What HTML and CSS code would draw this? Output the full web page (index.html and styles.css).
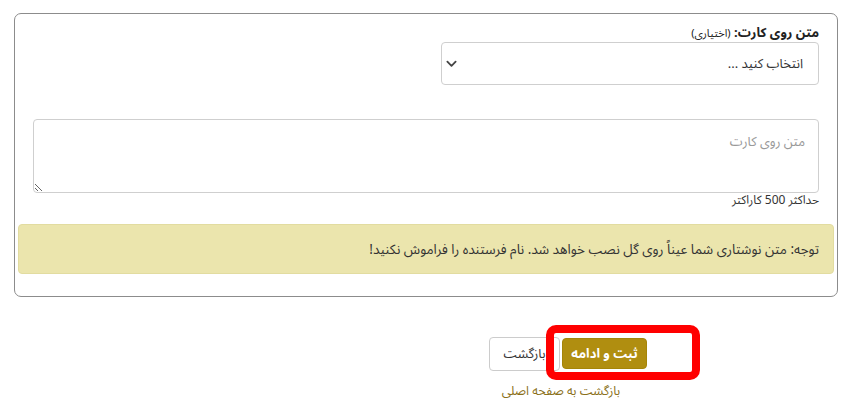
FILE: index.html
```html
<!DOCTYPE html>
<html lang="fa" dir="rtl">

<head>
  <meta charset="UTF-8">
  <meta name="viewport" content="width=device-width, initial-scale=1.0">
  <title>متن روی کارت</title>
  <link rel="stylesheet" href="styles.css">
</head>

<body>
  <div class="card">

    <!-- card text -->
    <div class="field">
      <label class="field-label" for="card-text-select">متن روی کارت: <small>(اختیاری)</small></label>
      <div class="select-wrap">
        <select id="card-text-select" class="select">
          <option>انتخاب کنید ...</option>
        </select>
        <svg class="chevron" viewBox="0 0 12 8" width="11" height="8">
          <path d="M1.5 1.5 L6 6 L10.5 1.5" fill="none" stroke="#444" stroke-width="2"
            stroke-linecap="round" stroke-linejoin="round"></path>
        </svg>
      </div>
    </div>

    <div class="field field-text">
      <textarea class="textarea" placeholder="متن روی کارت"></textarea>
      <div class="hint">حداکثر 500 کاراکتر</div>
    </div>

    <div class="alert">
      توجه: متن نوشتاری شما عیناً روی گل نصب خواهد شد. نام فرستنده را فراموش نکنید!
    </div>

  </div>

  <div class="actions">
    <div class="buttons">
      <button class="btn btn-primary">ثبت و ادامه</button>
      <button class="btn btn-default">بازگشت</button>
      <span class="highlight"></span>
    </div>
    <a class="home-link" href="#">بازگشت به صفحه اصلی</a>
  </div>
</body>

</html>
```

FILE: styles.css
```css
*,
*::before,
*::after {
  box-sizing: border-box;
}

body {
  margin: 0;
  background: #fff;
  color: #333;
  font-family: "Noto Sans Arabic", "DejaVu Sans", sans-serif;
  font-size: 13px;
}

.card {
  margin: 13px 22px 0 14px;
  height: 284px;
  border: 1px solid #8c8c8c;
  border-radius: 7px;
  padding: 0 3px;
}

.field {
  padding: 0 15px;
}

.field-label {
  display: block;
  padding-top: 5px;
  height: 28px;
  font-weight: bold;
  font-size: 13px;
  color: #222;
}

.field-label small {
  font-size: 11px;
  font-weight: normal;
}

.select-wrap {
  position: relative;
  width: 378px;
}

.select {
  appearance: none;
  width: 100%;
  height: 43px;
  padding: 0 15px;
  border: 1px solid #cfcfcf;
  border-radius: 4px;
  background: #fff;
  font: inherit;
  color: #333;
}

.chevron {
  position: absolute;
  left: 5px;
  top: 18px;
}

.field-text {
  margin-top: 34px;
}

.textarea {
  display: block;
  width: 100%;
  height: 74px;
  padding: 8px 13px;
  border: 1px solid #cfcfcf;
  border-radius: 4px;
  font: inherit;
  resize: vertical;
}

.textarea::placeholder {
  color: #999;
}

.hint {
  font-size: 12px;
  color: #333;
  line-height: 16px;
}

.alert {
  margin-top: 15px;
  height: 50px;
  padding: 0 14px;
  display: flex;
  align-items: center;
  background: #ebe5ad;
  border: 1px solid #e2dca0;
  border-radius: 4px;
  color: #333;
  font-size: 13.5px;
}

.actions {
  margin: 40px 213px 0 0;
  display: inline-flex;
  flex-direction: column;
  align-items: center;
}

.buttons {
  position: relative;
  display: flex;
  gap: 2px;
}

.btn {
  height: 34px;
  padding: 0 6px;
  border-radius: 4px;
  font: inherit;
  font-size: 13px;
  white-space: nowrap;
}

.btn-primary {
  margin-top: 1px;
  height: 31px;
  width: 85px;
  background: #b08e10;
  border: 1px solid #a58508;
  color: #fff;
  font-weight: bold;
}

.btn-default {
  width: 71px;
  background: #fff;
  border: 1px solid #ccc;
  color: #333;
}

.highlight {
  position: absolute;
  top: -12px;
  right: -53px;
  width: 154px;
  height: 55px;
  border: 8px solid #f00;
  border-radius: 10px;
  pointer-events: none;
}

.home-link {
  margin-top: 7px;
  margin-right: 14px;
  color: #8a7019;
  text-decoration: none;
  font-size: 12.5px;
}
```
